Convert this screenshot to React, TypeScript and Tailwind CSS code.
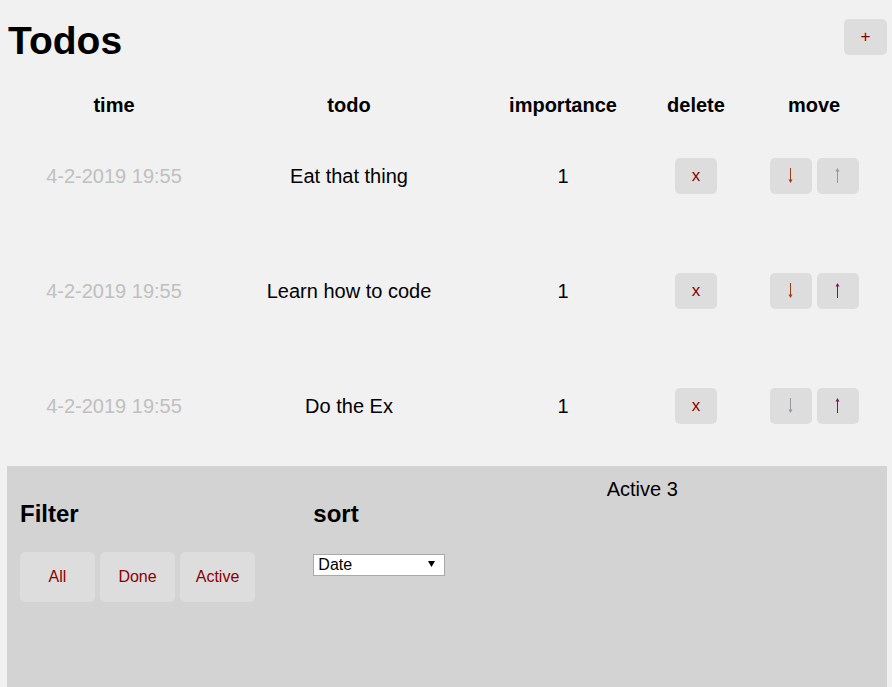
import React, { useState } from 'react';

interface Todo {
  id: number;
  time: string;
  text: string;
  importance: number;
}

const initial: Todo[] = [
  { id: 1, time: '4-2-2019 19:55', text: 'Eat that thing', importance: 1 },
  { id: 2, time: '4-2-2019 19:55', text: 'Learn how to code', importance: 1 },
  { id: 3, time: '4-2-2019 19:55', text: 'Do the Ex', importance: 1 },
];

const cols = 'grid grid-cols-[212px_258px_170px_96px_140px] pl-2';

// thin arrow like the unicode ↓ / ↑ glyph
const Arrow: React.FC<{ up?: boolean }> = ({ up }) => (
  <svg width="7" height="15" viewBox="0 0 7 15" className={up ? '' : 'rotate-180'}>
    <line x1="3.5" y1="2" x2="3.5" y2="15" stroke="currentColor" strokeWidth="1" />
    <polygon points="3.5,0 5.5,3.5 1.5,3.5" fill="currentColor" />
  </svg>
);

const App: React.FC = () => {
  const [todos, setTodos] = useState<Todo[]>(initial);
  const [sort, setSort] = useState('date');

  const move = (i: number, dir: number) => {
    const j = i + dir;
    if (j < 0 || j >= todos.length) return;
    const next = [...todos];
    [next[i], next[j]] = [next[j], next[i]];
    setTodos(next);
  };

  const remove = (id: number) => setTodos(todos.filter((t) => t.id !== id));

  return (
    <div className="min-h-screen flex flex-col bg-[#f1f1f1] text-black font-['Liberation_Sans',Arial,sans-serif]">
      {/* title */}
      <div className="flex justify-between items-start pt-[18px] pl-2 pr-[5px]">
        <h1 className="text-[39px] leading-[46px] font-bold">Todos</h1>
        <button className="mt-[1px] w-[43px] h-[36px] rounded-[5px] bg-[#dddddd] text-[#8b0000] text-[17px]">
          +
        </button>
      </div>

      {/* table header */}
      <div className={`${cols} mt-[26px] h-[28px] items-center text-center text-[20px] font-bold`}>
        <div>time</div>
        <div>todo</div>
        <div>importance</div>
        <div>delete</div>
        <div>move</div>
      </div>

      {todos.map((t, i) => (
        <div key={t.id} className={`${cols} h-[115px] items-center text-center text-[20px]`}>
          <div className="text-[#c0c0c0]">{t.time}</div>
          <div>{t.text}</div>
          <div>{t.importance}</div>
          <div className="flex justify-center">
            <button
              onClick={() => remove(t.id)}
              className="w-[42px] h-[36px] rounded-[5px] bg-[#dddddd] text-[#8b0000] text-[17px]"
            >
              x
            </button>
          </div>
          <div className="flex justify-center gap-[5px]">
            <button
              onClick={() => move(i, 1)}
              disabled={i === todos.length - 1}
              className="w-[42px] h-[36px] flex items-center justify-center rounded-[5px] bg-[#dddddd] text-[#9c3a10] disabled:text-[#9696a0]"
            >
              <Arrow />
            </button>
            <button
              onClick={() => move(i, -1)}
              disabled={i === 0}
              className="w-[42px] h-[36px] flex items-center justify-center rounded-[5px] bg-[#dddddd] text-[#8b1050] disabled:text-[#9696a0]"
            >
              <Arrow up />
            </button>
          </div>
        </div>
      ))}

      {/* footer */}
      <div className="flex-1 grid grid-cols-3 mt-[3px] ml-[7px] mr-[5px] bg-[#d3d3d3]">
        <div className="px-[13px] pt-[34px]">
          <h2 className="text-[24px] leading-[28px] font-bold">Filter</h2>
          <div className="flex gap-[5px] mt-[24px]">
            {['All', 'Done', 'Active'].map((f) => (
              <button
                key={f}
                className="w-[75px] h-[50px] rounded-[5px] bg-[#dddddd] text-[#8b0000] text-[16px]"
              >
                {f}
              </button>
            ))}
          </div>
        </div>
        <div className="px-[13px] pt-[34px]">
          <h2 className="text-[24px] leading-[28px] font-bold">sort</h2>
          <div className="relative mt-[25px] w-[132px] h-[22px]">
            <select
              value={sort}
              onChange={(e) => setSort(e.target.value)}
              className="appearance-none w-full h-full bg-white border border-[#a9a9a9] pl-[4px] text-[16px] leading-[20px] text-black"
            >
              <option value="date">Date</option>
              <option value="importance">Importance</option>
            </select>
            <svg className="absolute right-[10px] top-[8px] pointer-events-none" width="7" height="6" viewBox="0 0 7 6">
              <polygon points="0,0 7,0 3.5,6" fill="#000" />
            </svg>
          </div>
        </div>
        <div className="px-[13px] pt-[12px] text-[20px] leading-[23px]">
          Active {todos.length}
        </div>
      </div>
    </div>
  );
};

export default App;
